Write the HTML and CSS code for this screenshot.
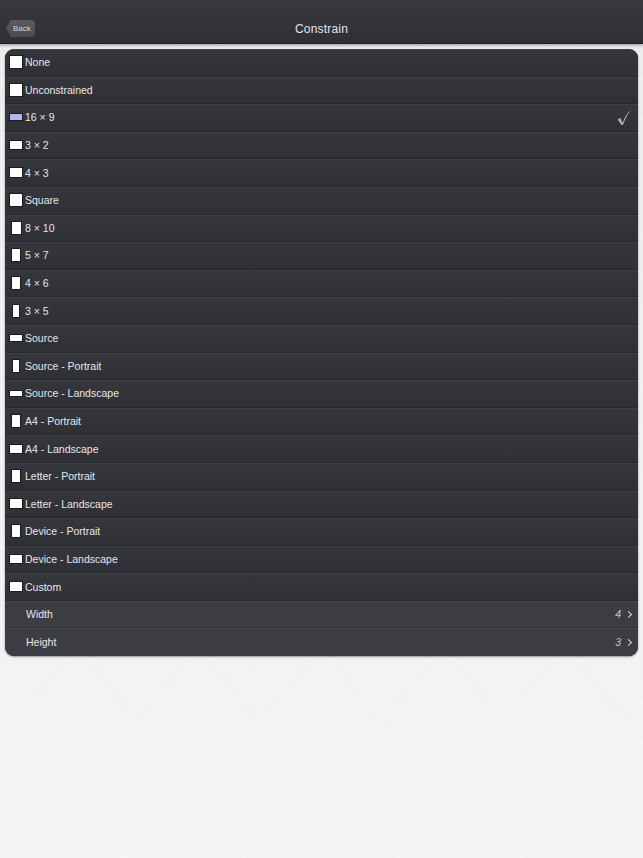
FILE: index.html
```html
<!DOCTYPE html>
<html lang="en">

<head>
    <meta charset="UTF-8">
    <meta name="viewport" content="width=device-width, initial-scale=1.0">
    <title>Constrain</title>
    <link rel="stylesheet" href="styles.css">
</head>

<body>
    <div class="navbar">
        <div class="back-btn">Back</div>
        <h1>Constrain</h1>
    </div>

    <div class="panel">
        <div class="row"><span class="slot"><span class="shape" style="width:14px;height:14px"></span></span>None</div>
        <div class="row"><span class="slot"><span class="shape" style="width:14px;height:14px"></span></span>Unconstrained</div>
        <div class="row selected"><span class="slot"><span class="shape" style="width:14px;height:8px"></span></span>16 × 9
            <svg class="check" width="16" height="17" viewBox="0 0 16 17"><path d="M1.5 10.5 L4.5 9 L6.5 14 C8.5 8.5 11 4 15 1 C11.5 5 9 10 7 16 L5.5 16 Z" fill="#aeaeb8"/></svg>
        </div>
        <div class="row"><span class="slot"><span class="shape" style="width:14px;height:9.5px"></span></span>3 × 2</div>
        <div class="row"><span class="slot"><span class="shape" style="width:14px;height:10.5px"></span></span>4 × 3</div>
        <div class="row"><span class="slot"><span class="shape" style="width:14px;height:14px"></span></span>Square</div>
        <div class="row"><span class="slot"><span class="shape" style="width:11px;height:14px"></span></span>8 × 10</div>
        <div class="row"><span class="slot"><span class="shape" style="width:10px;height:14px"></span></span>5 × 7</div>
        <div class="row"><span class="slot"><span class="shape" style="width:9.5px;height:14px"></span></span>4 × 6</div>
        <div class="row"><span class="slot"><span class="shape" style="width:8.5px;height:14px"></span></span>3 × 5</div>
        <div class="row"><span class="slot"><span class="shape" style="width:14px;height:7.5px"></span></span>Source</div>
        <div class="row"><span class="slot"><span class="shape" style="width:7.5px;height:14px"></span></span>Source - Portrait</div>
        <div class="row"><span class="slot"><span class="shape" style="width:14px;height:7.5px"></span></span>Source - Landscape</div>
        <div class="row"><span class="slot"><span class="shape" style="width:10px;height:14px"></span></span>A4 - Portrait</div>
        <div class="row"><span class="slot"><span class="shape" style="width:14px;height:10px"></span></span>A4 - Landscape</div>
        <div class="row"><span class="slot"><span class="shape" style="width:10.8px;height:14px"></span></span>Letter - Portrait</div>
        <div class="row"><span class="slot"><span class="shape" style="width:14px;height:10.8px"></span></span>Letter - Landscape</div>
        <div class="row"><span class="slot"><span class="shape" style="width:10.5px;height:14px"></span></span>Device - Portrait</div>
        <div class="row"><span class="slot"><span class="shape" style="width:14px;height:10.5px"></span></span>Device - Landscape</div>
        <div class="row"><span class="slot"><span class="shape" style="width:14px;height:10.5px"></span></span>Custom</div>
        <div class="row sub">Width<span class="value">4</span><span class="chevron"></span></div>
        <div class="row sub last">Height<span class="value">3</span><span class="chevron"></span></div>
    </div>
</body>

</html>
```

FILE: styles.css
```css
html,
body {
    height: 100%;
}

body {
    font-family: "Liberation Sans", Arial, sans-serif;
    margin: 0;
    padding: 0;
    background-color: #f1f1f1;
    background-image:
        repeating-linear-gradient(52deg, rgba(255, 255, 255, 0.35) 0 1px, transparent 1px 96px),
        repeating-linear-gradient(-52deg, rgba(255, 255, 255, 0.35) 0 1px, transparent 1px 96px),
        linear-gradient(#ececec, #f4f4f4);
}

.navbar {
    height: 44px;
    position: relative;
    display: flex;
    align-items: center;
    justify-content: center;
    padding-top: 14px;
    box-sizing: border-box;
    background: linear-gradient(#38383f, #2f2f36);
    border-bottom: 1px solid #1f1f24;
    box-shadow: 0 2px 2px rgba(0, 0, 0, 0.25);
}

.navbar h1 {
    margin: 0;
    font-size: 12px;
    font-weight: normal;
    color: #e4e4e8;
    letter-spacing: 0.2px;
}

.back-btn {
    position: absolute;
    left: 6px;
    top: 20px;
    height: 17px;
    width: 29px;
    box-sizing: border-box;
    padding-left: 7px;
    line-height: 17px;
    font-size: 8px;
    color: #d8d8dc;
    background: linear-gradient(#5c5c63, #4a4a51);
    border-radius: 4px;
    clip-path: polygon(5px 0, 100% 0, 100% 100%, 5px 100%, 0 50%);
}

.panel {
    margin: 5px 5px 0 5px;
    background: #33333a;
    border-radius: 9px;
    overflow: hidden;
    box-shadow: 0 1px 2px rgba(0, 0, 0, 0.4);
}

.row {
    height: 27.6px;
    box-sizing: border-box;
    display: flex;
    align-items: center;
    padding-left: 4px;
    padding-right: 6px;
    font-size: 10.5px;
    color: #e6e6ea;
    background: linear-gradient(#36363d, #2f2f36);
    border-bottom: 1px solid #26262b;
    box-shadow: inset 0 1px 0 rgba(255, 255, 255, 0.05);
}

.slot {
    width: 14px;
    height: 14px;
    margin-right: 2px;
    display: flex;
    align-items: center;
    justify-content: center;
    flex: none;
}

.shape {
    display: block;
    background: #fff;
    border: 1px solid #1c1c20;
    box-sizing: border-box;
}

.selected .shape {
    background: #b3b3f4;
}

.check {
    margin-left: auto;
}

.sub {
    padding-left: 21px;
    padding-right: 4px;
    background: #3c3c43;
    border-bottom: 1px solid #2e2e34;
}

.sub.last {
    border-bottom: none;
}

.value {
    margin-left: auto;
    font-style: italic;
    color: #c4c4ca;
    margin-right: 5px;
}

.chevron {
    width: 4px;
    height: 4px;
    border-right: 1.6px solid #d8d8dc;
    border-top: 1.6px solid #d8d8dc;
    transform: rotate(45deg);
    margin-right: 3px;
}
```
